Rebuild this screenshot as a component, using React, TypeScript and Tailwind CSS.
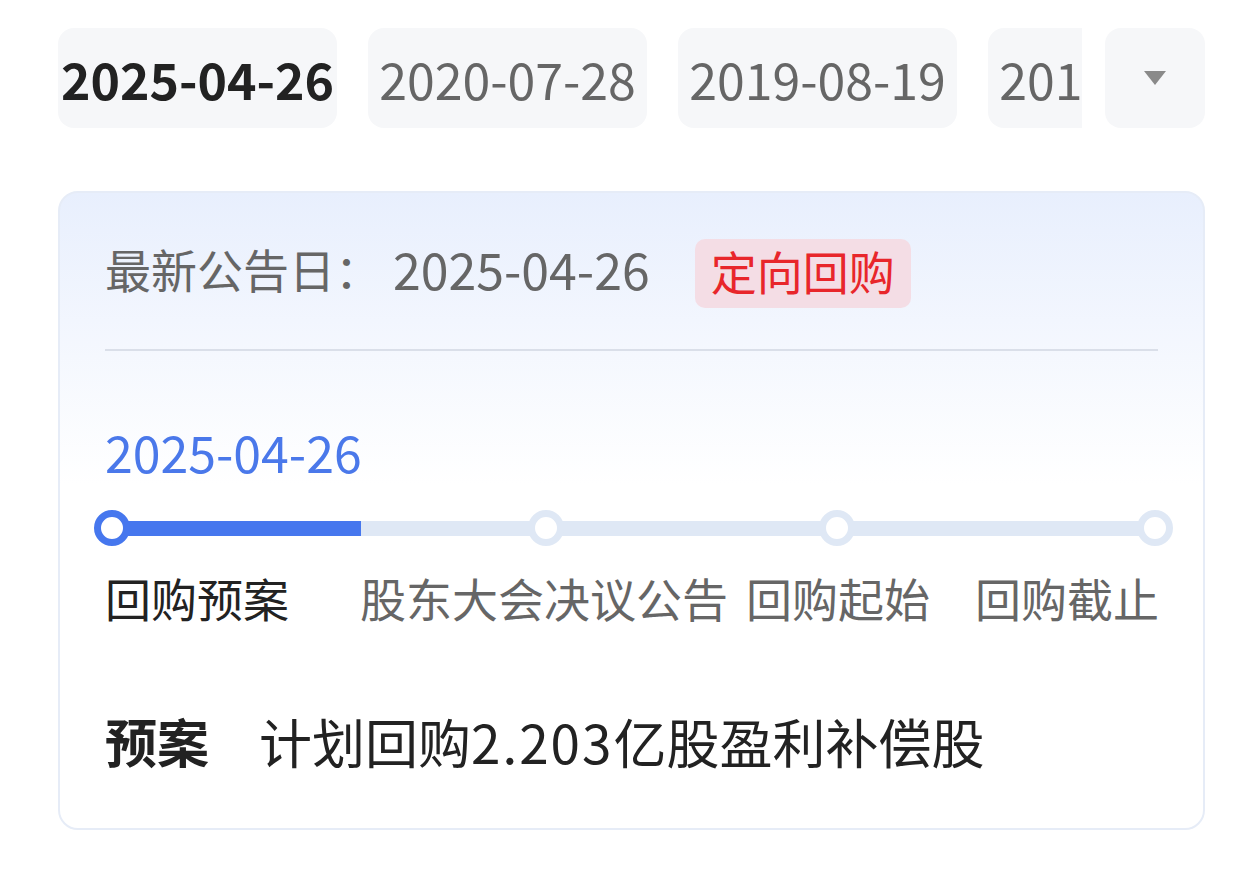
import React from "react";

const dates = ["2025-04-26", "2020-07-28", "2019-08-19", "2018-05-10"];

const steps = [
  { label: "回购预案", ml: "ml-0", active: true },
  { label: "股东大会决议公告", ml: "ml-[71px]", active: false },
  { label: "回购起始", ml: "ml-[18px]", active: false },
  { label: "回购截止", ml: "ml-[45px]", active: false },
];

const App: React.FC = () => {
  return (
    <div className="min-h-screen bg-white pt-[28px] pl-[58px] pr-[55px] font-['Noto_Sans_CJK_SC',sans-serif]">
      <div className="flex items-center">
        <div className="flex flex-1 gap-[31px] overflow-hidden">
          {dates.map((d, i) => (
            <div
              key={d}
              className={`flex h-[100px] w-[279px] shrink-0 items-center justify-center rounded-[16px] bg-[#f6f7f9] text-[50px] leading-none ${
                i === 0 ? "font-bold text-[#222222]" : "text-[#666666]"
              }`}
            >
              {d}
            </div>
          ))}
        </div>
        <div className="ml-[23px] flex h-[100px] w-[100px] shrink-0 items-center justify-center rounded-[16px] bg-[#f6f7f9]">
          <svg width="24" height="16" viewBox="0 0 24 16">
            <path d="M1 1h22L12 15z" fill="#8a8a8a" />
          </svg>
        </div>
      </div>

      <div className="mt-[63px] rounded-[20px] border-2 border-[#e6ecf7] bg-[linear-gradient(180deg,#e8effd_0%,#ffffff_46%)] px-[45px] pt-[46px] pb-[57px]">
        <div className="flex h-[69px] items-center">
          <span className="pb-[10px] text-[46px] text-[#666666]">最新公告日：</span>
          <span className="ml-[12px] pb-[10px] text-[50px] text-[#666666]">2025-04-26</span>
          <span className="ml-[45px] flex h-[69px] items-center rounded-[10px] bg-[#f4dde5] px-[16px] pb-[6px] text-[46px] text-[#e8262b]">
            定向回购
          </span>
        </div>
        <div className="mt-[41px] h-[2px] bg-[#dadfe9]" />

        <div className="mt-[70px] h-[60px] text-[50px] leading-[60px] text-[#4a78ea]">2025-04-26</div>

        <div className="relative mt-[29px] h-[36px]">
          <div className="absolute left-[7px] right-[5px] top-[11px] h-[15px] bg-[#dfe8f5]" />
          <div className="absolute left-[7px] top-[11px] h-[15px] w-[249px] bg-[#4677ee]" />
          <div className="absolute left-[-11px] top-0 h-[36px] w-[36px] rounded-full border-[7px] border-[#4677ee] bg-white" />
          <div className="absolute left-[423px] top-0 h-[36px] w-[36px] rounded-full border-[7px] border-[#dfe8f5] bg-white" />
          <div className="absolute left-[714px] top-0 h-[36px] w-[36px] rounded-full border-[7px] border-[#dfe8f5] bg-white" />
          <div className="absolute left-[1032px] top-0 h-[36px] w-[36px] rounded-full border-[7px] border-[#dfe8f5] bg-white" />
        </div>

        <div className="mt-[21px] flex h-[60px] items-center whitespace-nowrap text-[46px] leading-[60px]">
          {steps.map((s) => (
            <span key={s.label} className={`${s.ml} ${s.active ? "text-[#222222]" : "text-[#666666]"}`}>
              {s.label}
            </span>
          ))}
        </div>

        <div className="mt-[84px] flex h-[60px] items-center whitespace-nowrap text-[53px] leading-[60px] text-[#222222]">
          <span className="text-[52px] font-bold">预案</span>
          <span className="ml-[50px]">
            计划回购<span className="tracking-[2px]">2.203</span>亿股盈利补偿股
          </span>
        </div>
      </div>
    </div>
  );
};

export default App;
